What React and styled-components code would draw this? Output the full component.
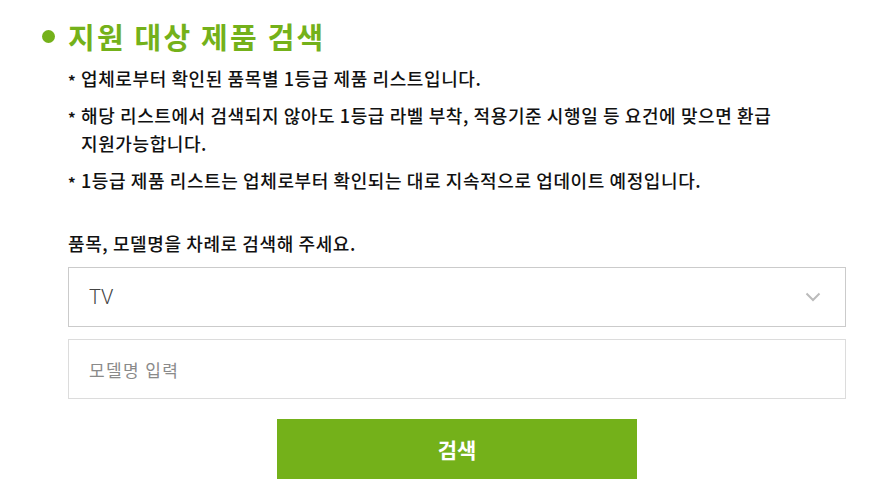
import styled, { createGlobalStyle } from 'styled-components'

const GlobalStyle = createGlobalStyle`
  body {
    margin: 0;
    background: #fff;
    font-family: 'Noto Sans CJK KR', 'Noto Sans', sans-serif;
    color: #111;
  }
`

const notes = [
  '업체로부터 확인된 품목별 1등급 제품 리스트입니다.',
  '해당 리스트에서 검색되지 않아도 1등급 라벨 부착, 적용기준 시행일 등 요건에 맞으면 환급 지원가능합니다.',
  '1등급 제품 리스트는 업체로부터 확인되는 대로 지속적으로 업데이트 예정입니다.',
]

function Chevron() {
  return (
    <svg width='16' height='10' viewBox='0 0 16 10' fill='none'>
      <path d='M1.5 1.5L8 8L14.5 1.5' stroke='#bbb' strokeWidth='2' />
    </svg>
  )
}

function App() {
  return (
    <Wrapper>
      <GlobalStyle />
      <Title>
        <Dot />
        지원 대상 제품 검색
      </Title>
      <Body>
        <Notes>
          {notes.map((n) => (
            <Note key={n}>
              <Mark>*</Mark>
              <span>{n}</span>
            </Note>
          ))}
        </Notes>
        <Label>품목, 모델명을 차례로 검색해 주세요.</Label>
        <Select>
          <SelectValue>TV</SelectValue>
          <Chevron />
        </Select>
        <Input placeholder='모델명 입력' />
        <ButtonRow>
          <SearchButton type='button'>검색</SearchButton>
        </ButtonRow>
      </Body>
    </Wrapper>
  )
}

const Wrapper = styled.div`
  padding: 18px 41px 0 42px;
`

const Title = styled.h2`
  display: flex;
  align-items: center;
  gap: 13px;
  margin: 0;
  font-size: 29px;
  line-height: 36px;
  font-weight: 700;
  color: #74b11a;
  letter-spacing: 2.2px;
`

const Dot = styled.span`
  width: 13px;
  height: 13px;
  border-radius: 50%;
  background: #74b11a;
`

const Body = styled.div`
  padding-left: 26px;
`

const Notes = styled.ul`
  list-style: none;
  margin: 10px 0 0;
  padding: 0;
  display: flex;
  flex-direction: column;
  gap: 9px;
`

const Note = styled.li`
  display: flex;
  font-size: 18px;
  font-weight: 500;
  line-height: 28px;
  letter-spacing: 0.6px;
  word-break: keep-all;
  color: #111;
`

const Mark = styled.span`
  flex: 0 0 13px;
  font-size: 15px;
  font-weight: 700;
  line-height: 28px;
  transform: translateY(3px);
`

const Label = styled.p`
  margin: 37px 0 12px;
  font-size: 18px;
  font-weight: 500;
  line-height: 24px;
  letter-spacing: 0.6px;
  color: #111;
`

const Select = styled.div`
  display: flex;
  align-items: center;
  justify-content: space-between;
  height: 58px;
  padding: 0 24px 0 20px;
  border: 1px solid #cbcbcb;
`

const SelectValue = styled.span`
  font-family: Roboto, 'Noto Sans CJK KR', sans-serif;
  font-size: 20px;
  font-weight: 300;
  color: #444;
`

const Input = styled.input`
  display: block;
  box-sizing: border-box;
  width: 100%;
  height: 60px;
  margin-top: 12px;
  padding: 0 20px;
  border: 1px solid #dcdcdc;
  font-family: 'Noto Sans CJK KR', sans-serif;
  font-size: 17px;
  letter-spacing: 1.4px;
  outline: none;
  &::placeholder {
    color: #8a8a8a;
  }
`

const ButtonRow = styled.div`
  display: flex;
  justify-content: center;
  margin-top: 20px;
`

const SearchButton = styled.button`
  width: 360px;
  height: 60px;
  border: none;
  background: #74b11a;
  color: #fff;
  font-family: 'Noto Sans CJK KR', sans-serif;
  font-size: 21px;
  font-weight: 700;
`

export default App
